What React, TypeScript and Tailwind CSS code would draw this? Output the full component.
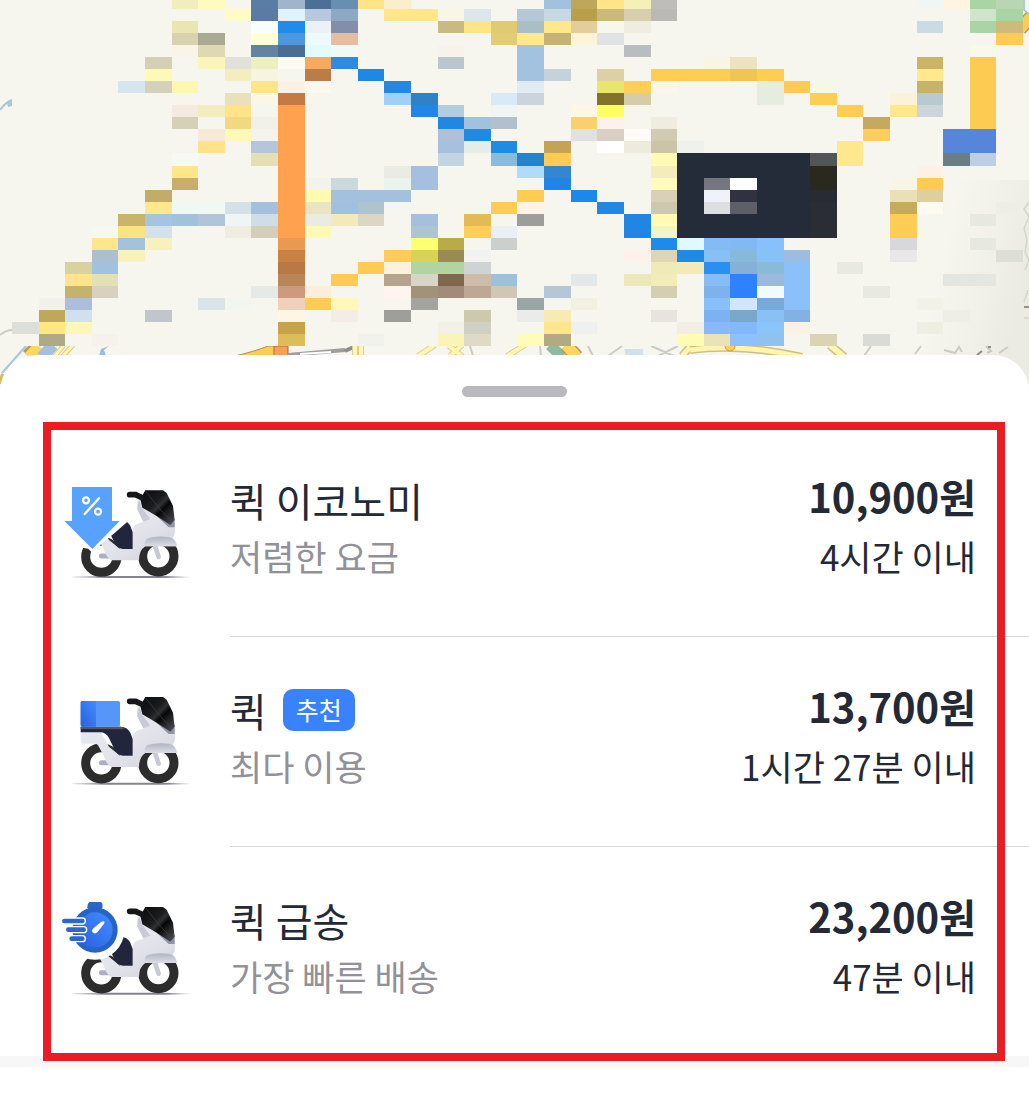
import type { ReactNode } from 'react'

// [column, color, column span?, row span?]
type Cell = [number, string, number?, number?]

const COLUMN_WIDTH = 26.605
const COLUMN_START = 12
const ROW_HEIGHT = 12.04

const MAP_ROWS: Cell[][] = [
  [[6, '#f2edbd'], [7, '#fffabd'], [9, '#5a7da6'], [10, '#a0b4ca'], [11, '#4c7095'], [12, '#688fb2'], [13, '#ffe588'], [14, '#fbeecb'], [20, '#a2c1de'], [21, '#bea65a'], [22, '#ffe588'], [23, '#f5f0b5'], [24, '#bebdb9'], [34, '#f1f6f5'], [35, '#fff5df'], [36, '#aad4a6'], [37, '#b8d6b1']],
  [[8, '#fffbc5'], [9, '#597ba4'], [10, '#e0f2fd'], [11, '#b8c9df'], [12, '#8ca9c4'], [14, '#ffe688', 2], [16, '#faf6e5'], [17, '#dfe5ec'], [19, '#b4c8d7'], [20, '#c7d8e2'], [21, '#b89f4b'], [22, '#cbb979'], [23, '#d7cfaf'], [24, '#bab9b6'], [36, '#cfe4c9'], [37, '#a9d4a5']],
  [[6, '#e9e6b4'], [9, '#fafffe'], [10, '#208be8'], [11, '#eaf1f7'], [12, '#848da9'], [16, '#c9b982'], [17, '#ffe588'], [18, '#e0cb73'], [19, '#a9bfc3'], [20, '#ffe78a'], [21, '#e3ce9b'], [22, '#f6f8ec'], [23, '#efeddf'], [34, '#cbdae3'], [36, '#aad4a6'], [37, '#cfba7d']],
  [[6, '#d8d2b0'], [7, '#aaa994'], [9, '#feffd6'], [10, '#4d98dc'], [11, '#effaff'], [12, '#e4bea2'], [18, '#e0cd75'], [19, '#ffe98b'], [20, '#c4b374'], [21, '#fff4d8'], [22, '#dfe3e4'], [37, '#ffcb52']],
  [[6, '#f9f3e8'], [7, '#dfd9b3'], [9, '#6283a2'], [10, '#4a6d94'], [11, '#e1fbff'], [12, '#f0f9f4'], [16, '#f8f3ea'], [19, '#a2c2df'], [23, '#b9bdbf'], [36, '#f7faea']],
  [[5, '#d4cfb5'], [7, '#faf5ba'], [8, '#e1e1d9'], [9, '#eeefc1'], [10, '#fdfaf2'], [11, '#f5a961'], [12, '#3089e2'], [16, '#bac6ce'], [19, '#a2c2df'], [26, '#f8f6e3'], [27, '#ede3c2'], [34, '#cbb466'], [36, '#fccb52', 1, 6]],
  [[5, '#fff9b8'], [8, '#f3eec0'], [9, '#f7f5df'], [11, '#b97d48'], [13, '#1f88e3'], [19, '#a2c2df'], [20, '#c5d2da'], [22, '#dfcfa5'], [24, '#ffcc54', 5], [27, '#efc554'], [34, '#ffe88e']],
  [[4, '#d5e6f1'], [5, '#d4d0ba'], [6, '#fcf7b1'], [9, '#ffe489'], [10, '#fcf1e5'], [11, '#fdf9ee'], [14, '#2587e0'], [19, '#e0ebf2'], [22, '#e9e66d'], [23, '#ffcf56'], [24, '#fdf7eb'], [28, '#e7ece1', 1, 2], [29, '#ffcb52'], [30, '#f6f8e7'], [34, '#c5b26d']],
  [[8, '#e8e1bb'], [9, '#fcf6e7'], [10, '#c47b43'], [14, '#9fd0f7'], [15, '#3181c9'], [18, '#d9e9f7'], [19, '#cbd3db'], [22, '#82722a'], [23, '#d6cca8'], [30, '#ffcd55'], [33, '#fbf2da'], [34, '#bac9d0']],
  [[6, '#f4eadf'], [7, '#f2edbd'], [8, '#ffe388'], [10, '#ffa14e', 1, 11], [15, '#2186e6'], [16, '#b4cee0'], [18, '#eff5f4'], [21, '#fff7e3'], [22, '#ffff63'], [31, '#ffce50'], [33, '#ffe78d'], [34, '#ccd6da']],
  [[6, '#d6d0b8'], [8, '#f2d981'], [9, '#f1f1e9'], [16, '#2088e1'], [17, '#a2c1dc'], [18, '#b2c0cd'], [21, '#facf6e'], [22, '#fdf2eb'], [24, '#f0ede0'], [32, '#c5aa5d']],
  [[7, '#f7ead5'], [8, '#fff9b9'], [9, '#f4f3ec'], [16, '#afbfd9'], [17, '#208ae2'], [21, '#e1e1e2'], [22, '#dacfc5'], [23, '#fffbf7'], [24, '#d1cbb1'], [32, '#fdce5e'], [35, '#5586dc', 2, 2]],
  [[7, '#ffe28a'], [9, '#b4c6d9'], [16, '#a5c1df'], [17, '#e5edea'], [18, '#208be3'], [20, '#c1a554'], [22, '#ffffff'], [23, '#edebdc'], [24, '#ccc4a6'], [25, '#edf2ec'], [31, '#fde88e', 1, 2]],
  [[6, '#f8f9f5'], [9, '#e5dfb7'], [16, '#c4d5e2'], [18, '#88bbe0'], [19, '#2482cf'], [20, '#ffcb52'], [24, '#fffab6'], [25, '#242c3a', 5, 7], [30, '#515556'], [35, '#6a7f85'], [36, '#becfe5']],
  [[6, '#ffe68b'], [14, '#eaebe5'], [15, '#a4c0de', 1, 2], [19, '#afdcf9'], [20, '#3487cf'], [24, '#f3edbd'], [30, '#292920', 1, 2], [34, '#fdf1e6']],
  [[6, '#c7af69'], [11, '#f2f4e9'], [12, '#cad9de'], [14, '#eaf4ef'], [20, '#2085e8'], [24, '#fffbbc'], [26, '#74777f'], [27, '#fdfcff'], [33, '#f7f5e5'], [34, '#ffcc51']],
  [[5, '#c3ac67'], [11, '#fff9b1'], [12, '#a3c0dd', 3], [19, '#ffcd51'], [21, '#1d87ec'], [24, '#d8d1b8'], [26, '#f0f2f9'], [27, '#30333f'], [30, '#292b34'], [33, '#eadfb5'], [34, '#dfcf9c']],
  [[5, '#ffe78d'], [6, '#f0f8f4', 2], [8, '#d4e1e9'], [9, '#a5bfde'], [11, '#e9e4c1'], [12, '#a1c0df'], [13, '#adc3ce'], [14, '#f5f5f2'], [18, '#ffcd56'], [19, '#fdf3e6'], [22, '#2187e4'], [24, '#cec9ac'], [26, '#dddee1'], [27, '#5d6068'], [30, '#2b2d34', 1, 3], [33, '#c6ac58'], [34, '#fdfaf2'], [37, '#eeeee6']],
  [[4, '#cab46a'], [5, '#a6c3e0'], [6, '#a2c1dc'], [7, '#b1c4d9'], [8, '#eef5f4'], [9, '#cfdde6'], [11, '#e9ece1'], [12, '#f2eabb'], [13, '#dcd7c4'], [15, '#a4c0dd'], [17, '#e4ba57'], [19, '#9c9e9a'], [23, '#2186e3', 1, 2], [24, '#fffbb5'], [33, '#ffcc54', 1, 2], [36, '#e7e8df']],
  [[3, '#f7f9ef'], [4, '#fae383'], [5, '#d4e1e8'], [8, '#f0ece0'], [9, '#d5cebb'], [11, '#fff9b6'], [15, '#afc4d1'], [17, '#ffce58'], [18, '#eaeff5'], [24, '#f1f5c4']],
  [[3, '#ffe58b'], [4, '#a5c2dd'], [5, '#f8f1bd'], [10, '#e99a52'], [15, '#ffff73'], [16, '#b7ac47'], [18, '#ccd0cc'], [24, '#208aea'], [25, '#e2f8ff'], [26, '#85bbf5'], [27, '#82b9f3'], [28, '#88c0fb'], [33, '#d6d8d9'], [36, '#e7e8df']],
  [[3, '#abbfd0'], [4, '#f8f1bd'], [10, '#ca8243'], [14, '#ffcc57'], [15, '#d7d354'], [16, '#9a8b56'], [17, '#f2f3f1'], [23, '#fcf2ea'], [24, '#ddd5b4'], [25, '#2089e4'], [26, '#87c0f6'], [27, '#86b9db'], [28, '#86c1f7'], [29, '#9abde1'], [33, '#e9e7e8'], [37, '#dddfd6']],
  [[2, '#d8d1a0'], [3, '#a1c1df'], [10, '#b97945'], [13, '#ffcb55'], [14, '#fcf1db'], [15, '#b2d4a0', 2], [17, '#ced3d4'], [24, '#f0eab8'], [25, '#f3eaba'], [26, '#2990f1'], [27, '#85b0d8'], [28, '#89bad8'], [29, '#8bc0fa', 1, 4], [31, '#e8e9e1']],
  [[2, '#ffe589'], [3, '#e5dfb5'], [10, '#ba8659'], [12, '#ffca56'], [14, '#b7a490'], [15, '#d8d4c6'], [16, '#806750'], [17, '#cdbca8'], [18, '#9dc1dc'], [21, '#e3e8e8'], [23, '#ebe7b9'], [24, '#f1ecb9'], [26, '#88bcf7'], [27, '#2e82ff', 1, 2], [28, '#9cb9d9'], [35, '#e5e6df', 2]],
  [[2, '#c5b26d'], [3, '#d9d1bf'], [9, '#e6eae6'], [10, '#cc9b7f'], [11, '#fbefdb'], [14, '#fff5ee'], [15, '#a1927a'], [16, '#a28b7b'], [17, '#bda895'], [18, '#d0c6b6'], [20, '#b5c6d6'], [24, '#d4ceb2'], [26, '#7eb2ed'], [28, '#f0faff'], [32, '#e8e9e1']],
  [[1, '#f2f1eb'], [2, '#acbfda'], [7, '#dbe4e8'], [8, '#f2f6f0'], [10, '#efd0bb'], [11, '#ffcb54'], [12, '#fff8b8'], [15, '#a3a3a0'], [19, '#9aa6a4'], [21, '#f4efe3'], [26, '#89c0fb'], [27, '#cfe8ff'], [28, '#77aadb'], [34, '#f2f2e9']],
  [[1, '#bfa85b'], [2, '#d1e0ee'], [5, '#c0c6cc'], [10, '#fff5e3'], [12, '#f4ece5'], [14, '#9e9f9b'], [17, '#cec9ad'], [19, '#e9ece8'], [20, '#f7ebb1'], [24, '#e7e4df'], [26, '#7cb2f1'], [27, '#79a8ca'], [28, '#89c0f6'], [29, '#84b0e5'], [35, '#eeeee6']],
  [[0, '#dfdfda'], [1, '#ffe782'], [2, '#fff6bd'], [10, '#c7a24a'], [16, '#f3f1e5'], [17, '#ced0c3'], [20, '#ffe68a'], [21, '#eff1ef'], [25, '#f3ede6'], [26, '#89b9f8'], [27, '#83b8fc'], [28, '#8bc3fb'], [29, '#f9f2e5'], [34, '#eeeee5']],
  [[1, '#aeaa83'], [3, '#f6f1ea'], [10, '#dcbd57'], [13, '#f2f2ed'], [16, '#faf4b6'], [17, '#dfdac6'], [19, '#fffcb9'], [20, '#b1aa84'], [25, '#fffab4'], [26, '#e8e3b8'], [27, '#8cc0fe'], [28, '#90c2f0'], [30, '#dad3b4'], [32, '#d9dbd7']],
]

function MapView() {
  return (
    <svg
      className="block h-[395px] w-full bg-[#f7f6ee]"
      viewBox="0 0 1029 395"
      preserveAspectRatio="none"
      role="img"
      aria-label="배송 경로 지도"
    >
      <defs>
        <linearGradient id="hill" x1="0" y1="0" x2="1" y2="0.4">
          <stop offset="0.4" stopColor="#ebebe4" stopOpacity="0" />
          <stop offset="1" stopColor="#ebebe4" />
        </linearGradient>
      </defs>
      <rect x="900" y="180" width="129" height="215" fill="url(#hill)" />

      {/* Streets around the mosaic */}
      <g fill="none" strokeLinecap="butt">
        <path d="M0 110Q6 102 12 100" stroke="#a8c6dd" strokeWidth="2" />
        <path d="M7 103L12 99V106L8 107Z" fill="#a8c6dd" />
        <path d="M0 335Q6 330 12 330" stroke="#cccbc5" strokeWidth="2" />
        <path d="M2 373L26 346" stroke="#a8c6dd" strokeWidth="2" />
        <path d="M0 384L3 374" stroke="#d9b958" strokeWidth="4" />
        <path d="M28 356L38 346" stroke="#b89b4c" strokeWidth="14" />
        <path d="M29 357L39 346" stroke="#ffd563" strokeWidth="11" />
        <path d="M42 357L53 345" stroke="#a3c1dd" strokeWidth="12" />
        <path d="M54 357L64 345M62 357L73 345" stroke="#d8ca87" strokeWidth="5" />
        <path d="M54 357L64 345M62 357L73 345" stroke="#fff5ad" strokeWidth="3" />
        <path d="M99 356L101 349L109 346L104 350L106 356Z" fill="#9dbdd9" />
        <path d="M235 356Q256 351 268 346H278V356Z" fill="#ffcc52" stroke="#a98e53" />
        <path d="M274 346H288V356H274Z" fill="#ff9e52" stroke="#9d7044" />
        <path d="M288 355L345 350" stroke="#9e9e9b" strokeWidth="4" />
        <path d="M300 354L331 352" stroke="#fff" strokeWidth="2" />
        <path d="M345 351L358 345" stroke="#8d8f8d" strokeWidth="4" />
        <path d="M355 345V357M361 345V357M418 356L435 345M449 346L463 357M450 356L462 345M507 356L525 345" stroke="#d5cf9d" strokeWidth="6" />
        <path d="M355 345V357M361 345V357M418 356L435 345M449 346L463 357M450 356L462 345M507 356L525 345" stroke="#fff5ad" strokeWidth="4" />
        <path d="M470 346L473 356M540 346L541 356M588 346L593 356M608 356L622 346M651 346L674 356M658 356L678 346" stroke="#c9ccc8" strokeWidth="2" />
        <path d="M550 345L562 357" stroke="#90b9a0" strokeWidth="11" />
        <path d="M566 345L577 357" stroke="#b69a52" strokeWidth="14" />
        <path d="M566 345L577 357" stroke="#ffd563" strokeWidth="11" />
        <path d="M624 349H643V356H626Z" fill="#d5e1e9" />
        <path d="M682 356L690 347M690 350Q740 343 802 357" stroke="#c9c18b" strokeWidth="8" />
        <path d="M682 356L690 347M690 350Q740 343 802 357" stroke="#fff5ad" strokeWidth="5" />
        <path d="M830 345L844 357" stroke="#c9c18b" strokeWidth="9" />
        <path d="M830 345L844 357" stroke="#fff5ad" strokeWidth="6" />
        <circle cx="730" cy="346" r="5" fill="#ffcf55" stroke="#c59c44" />
        <path d="M864 356L871 346M915 354L921 346M944 350L955 353L959 347L962 352M986 346L991 351L987 353M999 353L1008 347" stroke="#cbcbc5" strokeWidth="2" />
        <path d="M977 355L982 351M988 347H991" stroke="#918e80" strokeWidth="2" />
        <path d="M1029 202L1024 209L1029 217L1024 228L1027 240L1025 252L1029 260L1025 270M1028 290L1024 302M1024 318H1029" stroke="#d5d5ce" strokeWidth="1.5" />
        <path d="M1024 307H1029" stroke="#96927e" strokeWidth="2" />
        <path d="M1024 0V10L1029 14" stroke="#9db9d5" strokeWidth="1.5" />
        <path d="M1020 29L1031 17" stroke="#b9974d" strokeWidth="14" />
        <path d="M1020 29L1031 17" stroke="#ffcb52" strokeWidth="11" />
      </g>

      {/* Mosaic */}
      <rect x="12" y="0" width="888" height="346" fill="#f7f6ee" />
      <rect x="900" y="0" width="123" height="180" fill="#f7f6ee" />
      <g shapeRendering="crispEdges">
        {MAP_ROWS.map((cells, row) =>
          cells.map(([column, color, columns = 1, rows = 1]) => (
            <rect
              key={`${row}-${column}`}
              x={COLUMN_START + column * COLUMN_WIDTH}
              y={9 + (row - 1) * ROW_HEIGHT}
              width={columns * COLUMN_WIDTH}
              height={rows * ROW_HEIGHT}
              fill={color}
            />
          ))
        )}
      </g>
    </svg>
  )
}

type Variant = 'economy' | 'standard' | 'express'

function ScooterIcon({ variant }: { variant: Variant }) {
  return (
    <svg
      className="h-[100px] w-[132px] shrink-0"
      viewBox={variant === 'economy' ? '60 14 396 300' : '60 24 396 300'}
      aria-hidden="true"
    >
      <defs>
        <linearGradient id={`body-${variant}`} x1="0" y1="0" x2="1" y2="1">
          <stop offset="0" stopColor="#e9e9f1" />
          <stop offset="0.55" stopColor="#e4e5ec" />
          <stop offset="1" stopColor="#d0d2dc" />
        </linearGradient>
        <linearGradient id={`shield-${variant}`} x1="0" y1="0" x2="1" y2="1">
          <stop offset="0" stopColor="#080909" />
          <stop offset="0.4" stopColor="#1b1c1d" />
          <stop offset="0.5" stopColor="#303133" />
          <stop offset="0.6" stopColor="#050606" />
          <stop offset="1" stopColor="#56585c" />
        </linearGradient>
        <linearGradient id={`shadow-${variant}`}>
          <stop offset="0" stopColor="#92929e" stopOpacity="0.3" />
          <stop offset="0.3" stopColor="#858391" />
          <stop offset="0.8" stopColor="#858391" />
          <stop offset="1" stopColor="#92929e" stopOpacity="0.1" />
        </linearGradient>
        <linearGradient id={`fender-${variant}`} x1="0" y1="0" x2="0" y2="1">
          <stop offset="0" stopColor="#b2b4c4" />
          <stop offset="1" stopColor="#dcdde4" />
        </linearGradient>
        <linearGradient id={`blue-${variant}`} x1="0" y1="1" x2="1" y2="0">
          <stop offset="0" stopColor="#2860df" />
          <stop offset="1" stopColor="#438cff" />
        </linearGradient>
      </defs>

      <path d="M96 311Q96 308 184 308H360Q454 309 454 311Q454 314 275 314T96 311Z" fill={`url(#shadow-${variant})`} />

      {/* Wheels */}
      <circle cx="184" cy="250" r="47" fill="#fff" stroke="#2c2c2d" strokeWidth="27" />
      <circle cx="355" cy="249" r="47" fill="#fff" stroke="#2c2c2d" strokeWidth="27" />
      <path d="M184 248H222" stroke="#adb0bf" strokeWidth="15" strokeLinecap="round" />
      <path d="M346 221L356 251" stroke="#c7c9d3" strokeWidth="14" strokeLinecap="round" />

      {/* Body */}
      <path
        d="M122 155H182L207 200L240 227H278V168Q280 152 310 146L292 110V80L310 74L402 140L405 174Q405 186 398 194L411 219H316Q297 231 297 261H214Q198 252 190 225L174 196Q170 190 160 191H129Q122 189 122 182Z"
        fill={`url(#body-${variant})`}
      />
      <path d="M292 108L310 145L331 137L306 103L300 82L293 88Z" fill="#c8cad7" />
      <path d="M321 196Q345 187 388 191Q409 196 411 219H313Q313 203 321 196Z" fill={`url(#fender-${variant})`} />
      <path d="M350 128L386 162H404V137L391 120Z" fill="#8e95a8" />
      <path d="M122 140H241Q262 140 271 158L278 177V227H249Q233 227 223 207L207 174Q198 157 180 157H122Z" fill="#22263d" />
      <path d="M122 140H242L255 145L246 148L122 147Z" fill="#59575e" />

      {/* Windshield and handle */}
      <path d="M316 51H369L380 59L399 98L404 140L391 155L350 128L307 103L301 77Z" fill={`url(#shield-${variant})`} />
      <path d="M317 54L363 111L394 142" stroke="#424345" strokeWidth="2" fill="none" />
      <path d="M269 64H287L304 72" stroke="#151619" strokeWidth="17" strokeLinecap="round" fill="none" />

      {variant === 'standard' && (
        <g>
          <rect x="122" y="63" width="118" height="77" rx="5" fill="#5796f9" />
          <path d="M127 63H168V140H127Q122 140 122 135V68Q122 63 127 63Z" fill="url(#blue-standard)" />
        </g>
      )}

      {variant === 'economy' && (
        <g>
          <path d="M84 100L70 152L126 223L145 226L157 239L186 210L223 180L264 144L237 120L230 30H80Z" fill="#fff" />
          <path d="M96 41H216V143H239L157 227L73 143H96Z" fill="#57a1ff" />
          <path d="M177 75L134 122" stroke="#fff" strokeWidth="7" strokeLinecap="round" />
          <circle cx="138" cy="81" r="9" fill="none" stroke="#fff" strokeWidth="7" />
          <circle cx="174" cy="115" r="9" fill="none" stroke="#fff" strokeWidth="7" />
        </g>
      )}

      {variant === 'express' && (
        <g>
          <circle cx="165" cy="121" r="88" fill="#fff" />
          <path d="M62 30H200V180H62Z" fill="#fff" />
          <path d="M148 36H182Q190 40 187 53L174 69H154L142 52Q142 40 148 36Z" fill="#2966c5" />
          <circle cx="165" cy="120" r="68" fill="#2563c6" />
          <circle cx="165" cy="120" r="53" fill="url(#blue-express)" />
          <path d="M74 93H127M85 119H131M95 146H127" stroke="#fff" strokeWidth="22" strokeLinecap="round" />
          <path d="M73 93H127M85 119H131M95 146H127" stroke="#2d67c7" strokeWidth="14" strokeLinecap="round" />
          <path d="M190 94Q196 94 192 101L173 126Q164 134 158 127Q153 121 161 114L183 96Z" fill="#fff" />
        </g>
      )}
    </svg>
  )
}

interface DeliveryOption {
  variant: Variant
  name: string
  description: string
  price: string
  eta: string
  recommended?: boolean
}

const OPTIONS: DeliveryOption[] = [
  { variant: 'economy', name: '퀵 이코노미', description: '저렴한 요금', price: '10,900원', eta: '4시간 이내' },
  { variant: 'standard', name: '퀵', description: '최다 이용', price: '13,700원', eta: '1시간 27분 이내', recommended: true },
  { variant: 'express', name: '퀵 급송', description: '가장 빠른 배송', price: '23,200원', eta: '47분 이내' },
]

function Badge({ children }: { children: ReactNode }) {
  return (
    <span className="flex h-[42px] items-center rounded-[10px] bg-[#3a82fd] px-[13px] text-[25px] text-white">
      {children}
    </span>
  )
}

function OptionRow({ option }: { option: DeliveryOption }) {
  return (
    <li className="group">
      <button type="button" className="flex w-full gap-[38px] pl-[60px] text-left">
        <span className="pt-[51px]">
          <ScooterIcon variant={option.variant} />
        </span>
        <span className="flex h-[210px] flex-1 justify-between border-b border-[#d6d6d8] pt-[45px] pr-[53px] group-last:h-[209px] group-last:border-b-0">
          <span className="flex flex-col">
            <span className="flex h-14 items-center gap-4 text-[40px] text-[#242936]">
              {option.name}
              {option.recommended && <Badge>추천</Badge>}
            </span>
            <span className="h-14 text-[35px] leading-[56px] text-[#919197]">{option.description}</span>
          </span>
          <span className="flex flex-col text-right text-[#242936]">
            <span className="h-14 text-[40px] leading-[48px] font-bold">{option.price}</span>
            <span className="h-14 text-[35px] leading-[56px]">{option.eta}</span>
          </span>
        </span>
      </button>
    </li>
  )
}

export default function App() {
  return (
    <main className="min-h-screen bg-white font-['Noto_Sans_CJK_KR',sans-serif]">
      <MapView />

      {/* Bottom sheet */}
      <section className="relative -mt-10 rounded-t-[36px] bg-white pt-[31px]">
        <div className="mx-auto h-[11px] w-[105px] rounded-full bg-[#b9b9be]" />
        <div className="relative mt-[30px]">
          <ul>
            {OPTIONS.map((option) => (
              <OptionRow key={option.variant} option={option} />
            ))}
          </ul>
          {/* Highlight frame */}
          <div className="pointer-events-none absolute -top-[5px] right-6 -bottom-[5px] left-[43px] border-8 border-[#ec1c24]" />
        </div>
        <div className="h-[11px] bg-[#f7f7f7]" />
      </section>
    </main>
  )
}
